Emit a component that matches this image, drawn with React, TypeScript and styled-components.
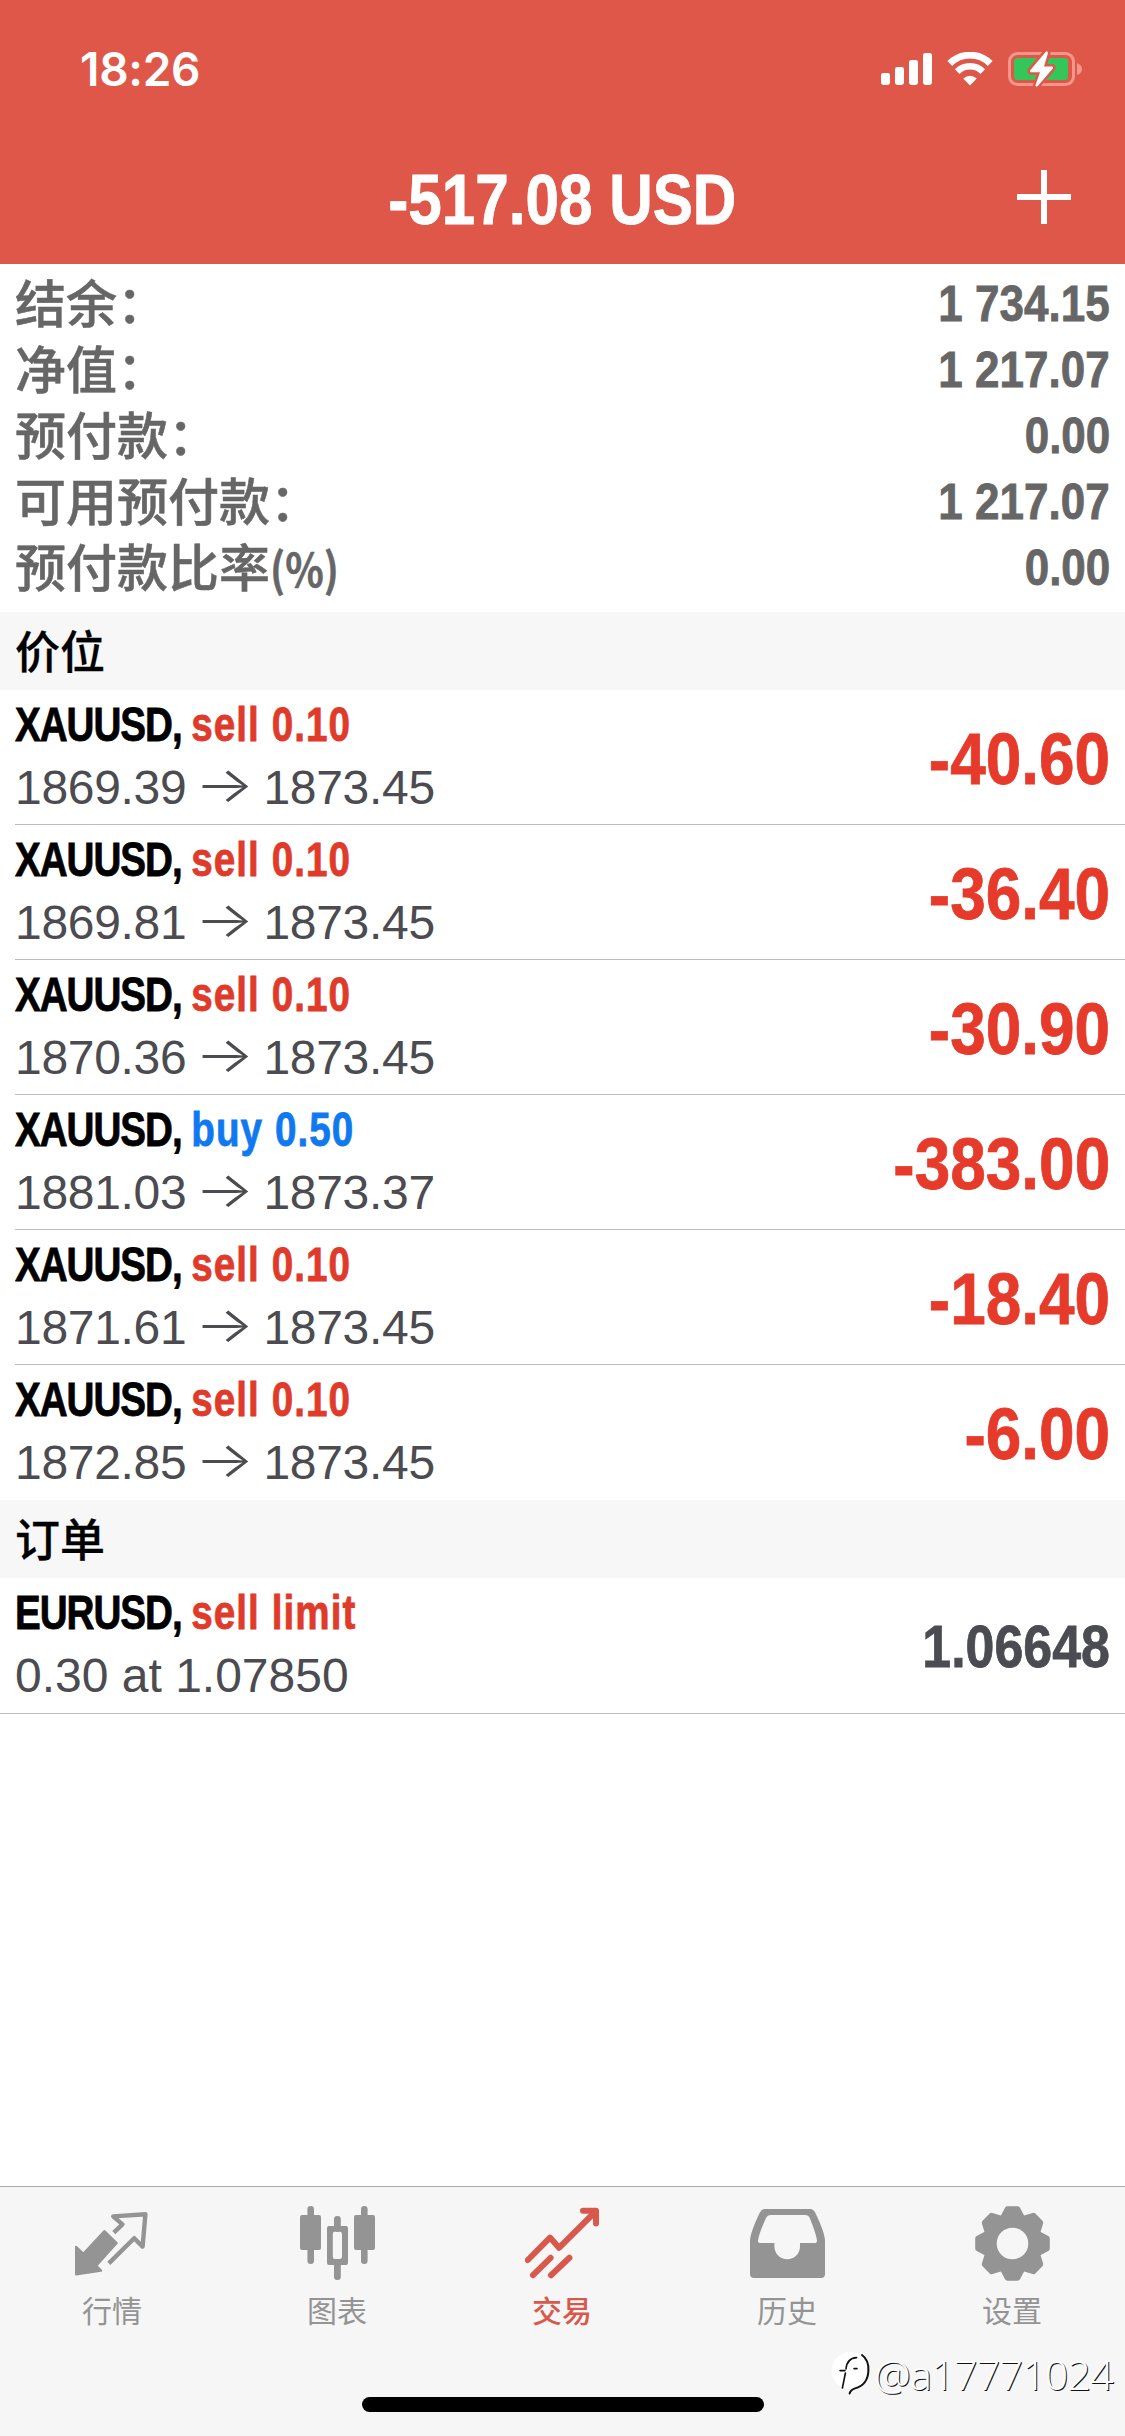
import React from "react";
import styled, { createGlobalStyle } from "styled-components";

const LATIN = `"Liberation Sans", "Noto Sans CJK SC", sans-serif`;
const CJK = `"Noto Sans CJK SC", "Liberation Sans", sans-serif`;

const GlobalStyle = createGlobalStyle`
  *, *::before, *::after { box-sizing: border-box; }
  body { margin: 0; background: #fff; font-family: ${LATIN}; }
`;

const Screen = styled.div`
  width: 1125px;
  height: 2436px;
  display: flex;
  flex-direction: column;
  background: #fff;
  overflow: hidden;
`;

/* ---------- header ---------- */

const Header = styled.header`
  height: 264px;
  flex: none;
  display: flex;
  flex-direction: column;
  background: #de5749;
  color: #fff;
`;

const StatusBar = styled.div`
  height: 138px;
  flex: none;
  display: flex;
  align-items: center;
  justify-content: space-between;
  padding: 0 42px 0 80px;
`;

const Clock = styled.span`
  font: 600 46px/60px Inter, sans-serif;
  letter-spacing: -0.3px;
`;

const StatusIcons = styled.div`
  display: flex;
  align-items: center;
  gap: 15px;
`;

const TitleBar = styled.div`
  height: 124px;
  display: grid;
  grid-template-columns: 1fr auto 1fr;
  align-items: center;
  padding: 0 54px;
`;

const Condensed = styled.span<{ $size: number; $scale?: number; $color?: string; $origin?: string }>`
  display: inline-block;
  white-space: nowrap;
  font-family: ${LATIN};
  font-weight: 700;
  font-size: ${(p) => p.$size}px;
  color: ${(p) => p.$color ?? "inherit"};
  -webkit-text-stroke: 0.8px currentColor;
  transform: scaleX(${(p) => p.$scale ?? 0.88});
  transform-origin: ${(p) => p.$origin ?? "right"} center;
`;

const AddButton = styled.button`
  justify-self: end;
  display: flex;
  margin-bottom: 6px;
  padding: 0;
  border: 0;
  background: none;
  color: #fff;
`;

/* ---------- account summary ---------- */

const Summary = styled.dl`
  height: 348px;
  flex: none;
  margin: 0;
  padding: 7px 15px 11px;
  color: #666;
`;

const SummaryRow = styled.div`
  height: 66px;
  display: flex;
  justify-content: space-between;
  line-height: 66px;
`;

const SummaryLabel = styled.dt`
  font: 500 51px/60px ${CJK};
  -webkit-text-stroke: 0.5px currentColor;
`;

const Unit = styled.span`
  display: inline-block;
  font-size: 46px;
  font-weight: 700;
  transform: scaleX(0.87);
  transform-origin: left center;
`;

const SummaryValue = styled.dd`
  margin: 0;
`;

/* ---------- lists ---------- */

const SectionTitle = styled.h2`
  height: 78px;
  flex: none;
  margin: 0;
  padding: 0 15px;
  background: #f7f7f7;
  color: #000;
  font: 500 45px/75px ${CJK};
  -webkit-text-stroke: 0.3px currentColor;
`;

const List = styled.ul`
  margin: 0;
  padding: 0;
  list-style: none;
`;

const Row = styled.li<{ $rule: "inset" | "full" | "none" }>`
  height: ${(p) => (p.$rule === "full" ? 136 : 135)}px;
  display: flex;
  justify-content: space-between;
  margin-left: ${(p) => (p.$rule === "full" ? 0 : 15)}px;
  padding: 3px 15px 0 ${(p) => (p.$rule === "full" ? 15 : 0)}px;
  border-bottom: ${(p) => (p.$rule === "none" ? 0 : 1)}px solid #bcbcbf;
`;

const RowText = styled.div`
  display: flex;
  flex-direction: column;
`;

const RowHeading = styled.div`
  height: 62px;
  line-height: 64px;
  white-space: nowrap;
`;

const Symbol = styled.span`
  color: #000;
  letter-spacing: -1.3px;
`;

const Side = styled.span<{ $buy?: boolean }>`
  color: ${(p) => (p.$buy ? "#1079f0" : "#e03a2b")};
  letter-spacing: 1.3px;
`;

const RowDetail = styled.div<{ $tight?: boolean }>`
  display: flex;
  align-items: center;
  height: 65px;
  font-size: 48px;
  line-height: 65px;
  letter-spacing: ${(p) => (p.$tight ? -0.3 : 0)}px;
  color: #4b4b50;
  white-space: pre;
`;

const Arrow = styled.span`
  width: 77px;
  text-align: center;
  font: 300 50px/65px Inter, sans-serif;
  letter-spacing: 0;
  transform: translateY(-3px) scaleX(1.25);
`;

const RowValue = styled.div`
  line-height: 132px;
`;

/* ---------- tab bar ---------- */

const TabBar = styled.nav`
  position: relative;
  height: 250px;
  flex: none;
  margin-top: auto;
  display: grid;
  grid-template-columns: repeat(5, 225px);
  grid-template-rows: 160px 90px;
  border-top: 1px solid #a9a9a9;
  background: #f6f6f6;
`;

const Tab = styled.a<{ $active?: boolean }>`
  display: flex;
  flex-direction: column;
  align-items: center;
  padding: 19px 1px 0 0;
  gap: 6px;
  color: ${(p) => (p.$active ? "#d9584c" : "#949494")};
  font: ${(p) => (p.$active ? 500 : 400)} 30px/44px ${CJK};
`;

const HomeIndicator = styled.div`
  grid-column: 1 / -1;
  justify-self: center;
  width: 402px;
  height: 15px;
  margin-top: 50px;
  border-radius: 8px;
  background: #000;
`;

const Watermark = styled.div`
  position: absolute;
  right: 12px;
  bottom: 33px;
  display: flex;
  align-items: center;
  gap: 3px;
  font: 300 41px/58px "Noto Sans", sans-serif;
  letter-spacing: -0.7px;
  color: #fdfdfd;
  text-shadow: 1px 1px 0 #111;
`;

/* ---------- icons ---------- */

const SignalIcon = () => (
  <svg width="51" height="34" viewBox="0 0 51 34" fill="#fff">
    <rect x="0" y="21" width="9" height="12" rx="2.4" />
    <rect x="14" y="15" width="9" height="18" rx="2.4" />
    <rect x="28" y="8" width="9" height="25" rx="2.4" />
    <rect x="42" y="1" width="9" height="32" rx="2.4" />
  </svg>
);

const WifiIcon = () => (
  <svg width="46" height="34" viewBox="0 0 46 34" fill="none" stroke="#fff">
    <path d="M2.8 11.5 A28.5 28.5 0 0 1 43.2 11.5" strokeWidth="6.8" />
    <path d="M10.2 19.6 A18 18 0 0 1 35.8 19.6" strokeWidth="6.6" />
    <path d="M23 33.5 L16.2 26.4 Q23 21 29.8 26.4 Z" fill="#fff" stroke="none" />
  </svg>
);

const BatteryIcon = () => (
  <svg width="75" height="38" viewBox="0 0 75 38">
    <rect x="1.5" y="3.5" width="64" height="31" rx="8" fill="none" stroke="#f3968b" strokeWidth="3" />
    <path d="M69 13 Q74 15 74 19 Q74 23 69 25 Z" fill="#f3968b" />
    <rect x="6" y="8" width="54" height="22" rx="3.5" fill="#33c759" />
    <path
      d="M38 1.6 L22 20.4 Q21.2 22 23 22.2 L32 22.2 L27.4 35.6 Q28 37.4 29.8 36 L45 18.2 Q45.6 16.6 44 16.4 L36 16.4 L40 3 Q39.6 .6 38 1.6 Z"
      fill="#fff"
      stroke="#de5749"
      strokeWidth="5"
      paintOrder="stroke"
    />
  </svg>
);

const PlusIcon = () => (
  <svg width="54" height="54" viewBox="0 0 54 54" stroke="currentColor" strokeWidth="6">
    <path d="M27 0V54M0 27H54" />
  </svg>
);

const QuotesIcon = () => (
  <svg width="75" height="75" viewBox="0 0 75 75" fill="none" stroke="currentColor">
    <path
      d="M1 41 L8.4 47.8 L29.3 25.2 L41.6 37 L21.2 59.8 L26 64.6 L1.2 68.4 Z"
      fill="currentColor"
      strokeWidth="2.4"
      strokeLinejoin="round"
    />
    <path
      d="M38.8 26.6 L47.4 18.3 L38.2 10.4 L70.4 8.2 L67.6 40.6 L59.2 32.2 L33.8 57.4"
      strokeWidth="4.4"
      strokeLinejoin="round"
    />
  </svg>
);

const ChartIcon = () => (
  <svg width="75" height="75" viewBox="0 0 75 75" fill="currentColor">
    <rect x="7.4" y="0" width="6.6" height="58" rx="3.2" />
    <rect x="0" y="9" width="21" height="35" rx="2" />
    <rect x="61" y="0" width="6.6" height="58" rx="3.2" />
    <rect x="54" y="9" width="21" height="35" rx="2" />
    <rect x="34" y="10" width="6.8" height="16" rx="3.2" />
    <rect x="34" y="54" width="6.8" height="20" rx="3.2" />
    <path
      fillRule="evenodd"
      d="M29 20H46Q48 20 48 22V57Q48 59 46 59H29Q27 59 27 57V22Q27 20 29 20ZM35 25.5Q32.8 25.5 32.8 28V50.5Q32.8 53 35 53H39.6Q42 53 42 50.5V28Q42 25.5 39.6 25.5Z"
    />
  </svg>
);

const TradeIcon = () => (
  <svg
    width="75"
    height="75"
    viewBox="0 0 75 75"
    fill="none"
    stroke="currentColor"
    strokeWidth="6"
    strokeLinecap="round"
    strokeLinejoin="round"
  >
    <path d="M2.8 54 L25 31.6 L34 41.8 L70 6" />
    <path d="M58 4.8 H71 V17.6" />
    <path d="M8 69.2 L25.6 51.8" />
    <path d="M26 69.2 L44.4 51.8" />
  </svg>
);

const HistoryIcon = () => (
  <svg width="75" height="75" viewBox="0 0 75 75" fill="currentColor">
    <path
      fillRule="evenodd"
      d="M15 3H60Q63.6 3 65.4 7Q75 27 75 35V68Q75 72 71 72H4Q0 72 0 68V35Q0 27 9.6 7Q11.4 3 15 3ZM21 9Q17.4 9 15.8 12.4Q8.8 28 8 34.4Q8 37 10.6 37H24.4V40.5A12.8 12.8 0 0 0 50 40.5V37H64.4Q67 37 67 34.4Q66.2 28 60 12.4Q58.6 9 55 9Z"
    />
  </svg>
);

const GearIcon = () => (
  <svg width="75" height="75" viewBox="-37.5 -37.5 75 75" fill="currentColor" stroke="currentColor">
    <circle r="22.8" fill="none" strokeWidth="14" />
    {[0, 45, 90, 135, 180, 225, 270, 315].map((angle) => (
      <path
        key={angle}
        d="M-9.5 -26 L-5 -34.5 H5 L9.5 -26 Z"
        strokeWidth="5.6"
        strokeLinejoin="round"
        transform={`rotate(${angle})`}
      />
    ))}
  </svg>
);

const BadgeIcon = () => (
  <svg width="40" height="46" viewBox="0 0 40 46" fill="none" strokeLinecap="round">
    <path d="M19 1 A18 18 0 1 1 19 38 A18 18 0 0 1 19 1Z" fill="#fff" />
    <path d="M31 4 Q38 9 37.4 20 Q36.6 34 24 37.4 Q19.6 38.6 18.6 42.6" stroke="#111" strokeWidth="2" />
    <path d="M9 19.6 H14 M15 18 Q16 7 25.6 6.6 M14.4 22 L11.4 37 M23 17.6 H26" stroke="#111" strokeWidth="1.6" />
  </svg>
);

/* ---------- data ---------- */

const summary = [
  { label: "结余：", value: "1 734.15" },
  { label: "净值：", value: "1 217.07" },
  { label: "预付款：", value: "0.00" },
  { label: "可用预付款：", value: "1 217.07" },
  { label: "预付款比率", unit: "(%)", value: "0.00" },
];

const positions = [
  { side: "sell", volume: "0.10", open: "1869.39", current: "1873.45", profit: "-40.60" },
  { side: "sell", volume: "0.10", open: "1869.81", current: "1873.45", profit: "-36.40" },
  { side: "sell", volume: "0.10", open: "1870.36", current: "1873.45", profit: "-30.90" },
  { side: "buy", volume: "0.50", open: "1881.03", current: "1873.37", profit: "-383.00" },
  { side: "sell", volume: "0.10", open: "1871.61", current: "1873.45", profit: "-18.40" },
  { side: "sell", volume: "0.10", open: "1872.85", current: "1873.45", profit: "-6.00" },
];

const tabs = [
  { label: "行情", Icon: QuotesIcon },
  { label: "图表", Icon: ChartIcon },
  { label: "交易", Icon: TradeIcon, active: true },
  { label: "历史", Icon: HistoryIcon },
  { label: "设置", Icon: GearIcon },
];

export default function App() {
  return (
    <Screen>
      <GlobalStyle />
      <Header>
        <StatusBar>
          <Clock>18:26</Clock>
          <StatusIcons>
            <SignalIcon />
            <WifiIcon />
            <BatteryIcon />
          </StatusIcons>
        </StatusBar>
        <TitleBar>
          <span />
          <Condensed $size={70} $scale={0.86} $origin="center">
            -517.08 USD
          </Condensed>
          <AddButton aria-label="add">
            <PlusIcon />
          </AddButton>
        </TitleBar>
      </Header>

      <Summary>
        {summary.map(({ label, unit, value }) => (
          <SummaryRow key={label}>
            <SummaryLabel>
              {label}
              {unit && <Unit>{unit}</Unit>}
            </SummaryLabel>
            <SummaryValue>
              <Condensed $size={50}>{value}</Condensed>
            </SummaryValue>
          </SummaryRow>
        ))}
      </Summary>

      <SectionTitle>价位</SectionTitle>
      <List>
        {positions.map((p, i) => (
          <Row key={p.open} $rule={i < positions.length - 1 ? "inset" : "none"}>
            <RowText>
              <RowHeading>
                <Condensed $size={48} $scale={0.805} $origin="left">
                  <Symbol>XAUUSD, </Symbol>
                  <Side $buy={p.side === "buy"}>
                    {p.side} {p.volume}
                  </Side>
                </Condensed>
              </RowHeading>
              <RowDetail $tight>
                {p.open}
                <Arrow>→</Arrow>
                {p.current}
              </RowDetail>
            </RowText>
            <RowValue>
              <Condensed $size={72} $scale={0.888} $color="#e63a2a">
                {p.profit}
              </Condensed>
            </RowValue>
          </Row>
        ))}
      </List>

      <SectionTitle>订单</SectionTitle>
      <List>
        <Row $rule="full">
          <RowText>
            <RowHeading>
              <Condensed $size={48} $scale={0.805} $origin="left">
                <Symbol>EURUSD, </Symbol>
                <Side>sell limit</Side>
              </Condensed>
            </RowHeading>
            <RowDetail>0.30 at 1.07850</RowDetail>
          </RowText>
          <RowValue>
            <Condensed $size={60} $scale={0.865} $color="#4b4b52">
              1.06648
            </Condensed>
          </RowValue>
        </Row>
      </List>

      <TabBar>
        {tabs.map(({ label, Icon, active }) => (
          <Tab key={label} $active={active}>
            <Icon />
            {label}
          </Tab>
        ))}
        <HomeIndicator />
        <Watermark>
          <BadgeIcon />
          @a17771024
        </Watermark>
      </TabBar>
    </Screen>
  );
}
